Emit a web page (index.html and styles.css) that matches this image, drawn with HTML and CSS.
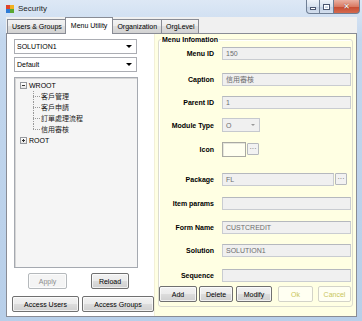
FILE: index.html
```html
<!DOCTYPE html>
<html lang="zh-Hant">
<head>
    <meta charset="UTF-8">
    <title>Security</title>
    <link rel="stylesheet" href="styles.css">
</head>
<body>
<div class="window">
    <div class="titlebar">
        <svg class="app-icon" width="8" height="8" viewBox="0 0 8 8">
            <rect x="0" y="0" width="4" height="4" fill="#e0452b"/>
            <rect x="4" y="0" width="4" height="4" fill="#f2b01e"/>
            <rect x="0" y="4" width="4" height="4" fill="#2e7bd6"/>
            <rect x="4" y="4" width="4" height="4" fill="#5aa832"/>
        </svg>
        <span class="title">Security</span>
        <div class="controls">
            <span class="cbtn min"><i></i></span>
            <span class="cbtn max"><i></i></span>
            <span class="cbtn close">✕</span>
        </div>
    </div>
    <div class="client">
        <div class="tabs">
            <div class="tab">Users &amp; Groups</div>
            <div class="tab active">Menu Utility</div>
            <div class="tab">Organization</div>
            <div class="tab">OrgLevel</div>
        </div>
        <div class="page">
            <div class="left">
                <div class="combo">SOLUTION1<b class="arrow"></b></div>
                <div class="combo">Default<b class="arrow"></b></div>
                <ul class="tree">
                    <li class="node">
                        <span class="toggle minus"></span>WROOT
                        <ul class="children">
                            <li>客戶管理</li>
                            <li>客戶申請</li>
                            <li>訂單處理流程</li>
                            <li>信用審核</li>
                        </ul>
                    </li>
                    <li class="node"><span class="toggle plus"></span>ROOT</li>
                </ul>
                <div class="btn-row top-row">
                    <span class="btn disabled apply">Apply</span>
                    <span class="btn reload">Reload</span>
                </div>
                <div class="btn-row bottom-row">
                    <span class="btn users">Access Users</span>
                    <span class="btn groups">Access Groups</span>
                </div>
            </div>
            <div class="right">
                <fieldset class="group">
                    <legend>Menu Infomation</legend>
                    <div class="fields">
                        <div class="field"><label>Menu ID</label><span class="text">150</span></div>
                        <div class="field"><label>Caption</label><span class="text">信用審核</span></div>
                        <div class="field"><label>Parent ID</label><span class="text">1</span></div>
                        <div class="field"><label>Module Type</label><span class="select">O<b class="arrow"></b></span></div>
                        <div class="field"><label>Icon</label><span class="icon-box"></span><span class="dots">···</span></div>
                        <div class="field"><label>Package</label><span class="text short">FL</span><span class="dots">···</span></div>
                        <div class="field"><label>Item params</label><span class="text"></span></div>
                        <div class="field"><label>Form Name</label><span class="text">CUSTCREDIT</span></div>
                        <div class="field"><label>Solution</label><span class="text">SOLUTION1</span></div>
                        <div class="field"><label>Sequence</label><span class="text"></span></div>
                        <div class="actions">
                            <span class="btn add">Add</span>
                            <span class="btn delete">Delete</span>
                            <span class="btn modify">Modify</span>
                            <span class="btn ghost ok">Ok</span>
                            <span class="btn ghost cancel">Cancel</span>
                        </div>
                    </div>
                </fieldset>
            </div>
        </div>
    </div>
</div>
</body>
</html>
```
FILE: styles.css
```css
* {
    box-sizing: border-box;
}

body {
    margin: 0;
    font-family: "Liberation Sans", "Noto Sans CJK TC", sans-serif;
    font-size: 7px;
    color: #000;
}

.window {
    width: 362px;
    height: 321px;
    display: flex;
    flex-direction: column;
    background: linear-gradient(#dde8f5, #c3d7ee 40px, #b8cfe9);
}

/* title bar */
.titlebar {
    height: 17px;
    display: flex;
    align-items: flex-start;
    padding-left: 6px;
}

.app-icon {
    margin-top: 5px;
}

.title {
    margin: 4px 0 0 4px;
    font-size: 8px;
    line-height: 10px;
    color: #1e1e1e;
}

.controls {
    margin-left: auto;
    margin-right: 2px;
    display: flex;
}

.cbtn {
    height: 14px;
    display: flex;
    align-items: center;
    justify-content: center;
    border: 1px solid #6f7f95;
    border-top: none;
    background: linear-gradient(#eef3fa, #d6e1ee 50%, #c1cfe2 51%, #d3dfee);
}

.cbtn.min {
    width: 14px;
    border-radius: 0 0 0 4px;
}

.cbtn.min i {
    width: 6px;
    height: 3px;
    margin-top: 4px;
    background: #fff;
    border: 1px solid #4a5670;
}

.cbtn.max {
    width: 14px;
    border-left: none;
}

.cbtn.max i {
    width: 7px;
    height: 6px;
    border: 1px solid #4a5670;
    box-shadow: inset 0 0 0 1px #fff;
}

.cbtn.close {
    width: 26px;
    border-left: none;
    border-radius: 0 0 4px 0;
    background: linear-gradient(#eab1a3, #d97b64 50%, #c64a30 51%, #d46a4f);
    color: #fff;
    font-size: 8px;
    font-weight: bold;
    font-family: "DejaVu Sans", sans-serif;
    text-shadow: 0 0 1px #5a1a10;
}

/* client area */
.client {
    flex: 1;
    margin: 0 5px 4px 6px;
    background: #f0f0f0;
    display: flex;
    flex-direction: column;
}

.tabs {
    height: 16px;
    display: flex;
    align-items: flex-end;
    padding-left: 1px;
}

.tab {
    height: 14px;
    padding: 0 4px;
    line-height: 13px;
    border: 1px solid #898c95;
    border-bottom: none;
    margin-right: -1px;
    background: linear-gradient(#f3f3f3, #ebebeb 50%, #dedede 50%, #d2d2d2);
    white-space: nowrap;
}

.tab.active {
    height: 17px;
    line-height: 15px;
    margin: 0 -1px -1px -1px;
    padding: 0 5px;
    background: #fff;
    position: relative;
    z-index: 1;
}

.page {
    flex: 1;
    display: flex;
    border: 1px solid #898c95;
    background: #fff;
}

/* left side */
.left {
    width: 148px;
    padding: 5px 0 0 5px;
    display: flex;
    flex-direction: column;
}

.combo {
    margin: 0 0 3px 2px;
    width: 123px;
    height: 15px;
    padding-left: 2px;
    line-height: 13px;
    border: 1px solid #abadb3;
    background: #fff;
    display: flex;
    align-items: center;
}

.arrow {
    margin-left: auto;
    margin-right: 4px;
    border-left: 3px solid transparent;
    border-right: 3px solid transparent;
    border-top: 3px solid #000;
}

.tree {
    list-style: none;
    margin: 2px 0 0 2px;
    padding: 2px 0 0 5px;
    width: 124px;
    height: 191px;
    background: #f5f5f5;
    border: 1px solid #a5a9b0;
    box-shadow: inset 1px 1px 0 #d6d6d6;
}

.tree li {
    line-height: 11px;
}

.toggle {
    display: inline-block;
    width: 7px;
    height: 7px;
    margin-right: 2px;
    vertical-align: -1px;
    border: 1px solid #96999e;
    background: linear-gradient(#fff, #e4e4e4);
}

.toggle.minus {
    background: linear-gradient(#333, #333) center / 3px 1px no-repeat, linear-gradient(#fff, #e4e4e4);
}

.toggle.plus {
    background: linear-gradient(#333, #333) center / 3px 1px no-repeat,
                linear-gradient(#333, #333) center / 1px 3px no-repeat,
                linear-gradient(#fff, #e4e4e4);
}

.children {
    list-style: none;
    margin: 0 0 0 13px;
    padding: 0;
    color: #222;
}

.children li {
    padding-left: 8px;
    background:
        repeating-linear-gradient(to right, #9a9a9a 0 1px, transparent 1px 2px) 0 5px / 7px 1px no-repeat,
        repeating-linear-gradient(#9a9a9a 0 1px, transparent 1px 2px) 0 0 / 1px 100% no-repeat;
}

.children li:last-child {
    background:
        repeating-linear-gradient(to right, #9a9a9a 0 1px, transparent 1px 2px) 0 5px / 7px 1px no-repeat,
        repeating-linear-gradient(#9a9a9a 0 1px, transparent 1px 2px) 0 0 / 1px 6px no-repeat;
}

/* buttons */
.btn {
    display: inline-flex;
    align-items: center;
    justify-content: center;
    height: 16px;
    border: 1px solid #707070;
    border-radius: 2px;
    background: linear-gradient(#f2f2f2, #ebebeb 50%, #dddddd 50%, #cfcfcf);
    box-shadow: inset 0 0 0 1px rgba(255, 255, 255, 0.7);
    white-space: nowrap;
}

.btn.disabled {
    border-color: #b5b9bc;
    background: #f4f4f4;
    color: #8d8d8d;
}

.btn-row {
    display: flex;
}

.top-row {
    margin-top: 5px;
    padding-left: 16px;
    gap: 24px;
}

.apply {
    width: 39px;
}

.reload {
    width: 38px;
}

.bottom-row {
    margin-top: 7px;
    gap: 3px;
}

.users {
    width: 67px;
}

.groups {
    width: 72px;
}

/* right side */
.right {
    flex: 1;
    padding: 1px 3px 0 3px;
    background: #ffffe3;
    border-left: 1px solid #f3f0d8;
}

.group {
    margin: 0;
    padding: 0 1px 4px 0;
    min-width: 0;
    border: 1px solid #dcdccf;
    border-radius: 3px;
    box-shadow: inset 1px 1px 0 #fff;
}

.group legend {
    margin-left: 2px;
    padding: 0 1px;
    font-weight: bold;
    line-height: 9px;
}

.fields {
    margin-top: 2px;
    display: grid;
    grid-template-rows: 26px 23px 23px 24px 30px 24px 24px 23px 25px 18px 16px;
    align-items: start;
}

.field {
    display: flex;
    align-items: center;
    height: 14px;
}

.field label {
    width: 55px;
    margin-right: 8px;
    text-align: right;
    font-weight: bold;
    white-space: nowrap;
}

.text {
    flex: 1;
    height: 13px;
    padding-left: 3px;
    line-height: 11px;
    color: #6d6d6d;
    background: #f0f0f0;
    border: 1px solid #c9ccd1;
    border-top-color: #b5b8be;
}

.text.short {
    flex: none;
    width: 112px;
}

.select {
    width: 38px;
    height: 14px;
    padding-left: 3px;
    display: flex;
    align-items: center;
    color: #6d6d6d;
    background: #f0f0f0;
    border: 1px solid #c6c9ce;
}

.select .arrow {
    margin-right: 4px;
    border-top-color: #999;
    border-width: 2px 2px 0;
}

.icon-box {
    width: 24px;
    height: 15px;
    background: #fffff0;
    border: 1px solid #a9a9a3;
    box-shadow: inset 1px 1px 0 #e6e6dc;
}

.dots {
    width: 12px;
    height: 12px;
    margin-left: 1px;
    line-height: 9px;
    text-align: center;
    color: #555;
    background: #f2f2f2;
    border: 1px solid #b5b8bd;
    border-radius: 1px;
}

.actions {
    display: flex;
    height: 16px;
}

.add {
    width: 38px;
}

.delete {
    width: 34px;
    margin-left: 2px;
}

.modify {
    width: 36px;
    margin-left: 3px;
}

.btn.ghost {
    color: #c9c65a;
    border-color: #d3d3c8;
    background: #fffff2;
    box-shadow: none;
}

.ok {
    width: 35px;
    margin-left: 6px;
}

.cancel {
    width: 33px;
    margin-left: 5px;
}
```
